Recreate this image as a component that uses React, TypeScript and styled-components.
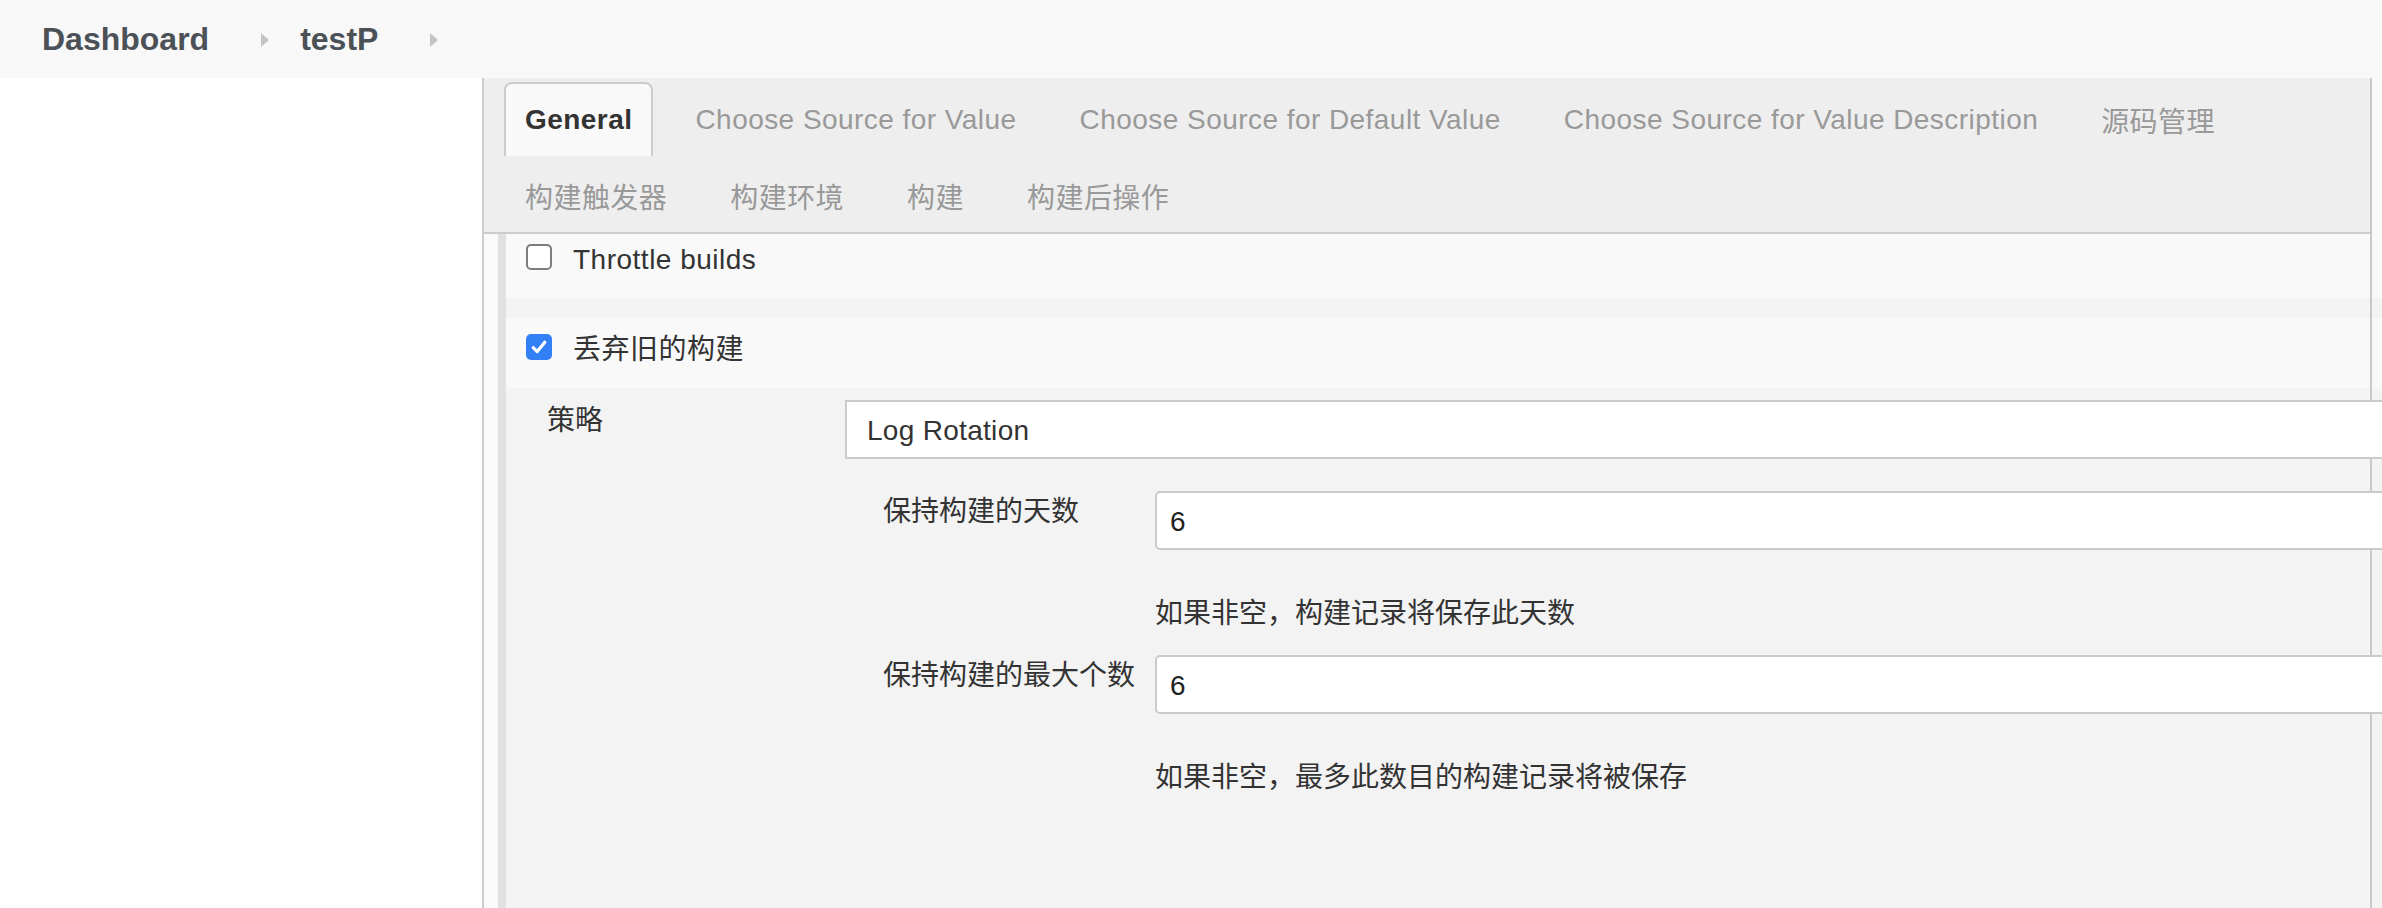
import React from 'react';
import styled, { createGlobalStyle } from 'styled-components';

const Global = createGlobalStyle`
  html, body {
    margin: 0;
    padding: 0;
    overflow: hidden;
    background: #ffffff;
  }
  body {
    font-family: "Liberation Sans", "Noto Sans CJK SC", sans-serif;
    color: #333333;
  }
  #root {
    height: 100vh;
  }
`;

const Page = styled.div`
  display: flex;
  flex-direction: column;
  height: 100vh;
`;

const Header = styled.header`
  flex: none;
  height: 78px;
  background: #f8f8f8;
  display: flex;
  align-items: center;
  padding-left: 42px;
`;

const Crumb = styled.a`
  font-size: 32px;
  font-weight: 700;
  color: #4b5157;
  text-decoration: none;
`;

const CrumbArrow = styled.span`
  width: 0;
  height: 0;
  border-top: 7px solid transparent;
  border-bottom: 7px solid transparent;
  border-left: 8px solid #c4c4c4;
  margin: 2px 31px 0 52px;
`;

const Body = styled.div`
  flex: 1;
  display: flex;
  min-height: 0;
`;

const Sidebar = styled.aside`
  flex: none;
  width: 482px;
  background: #ffffff;
  border-right: 2px solid #cccccc;
`;

const Main = styled.main`
  flex: 1;
  position: relative;
  display: flex;
  flex-direction: column;
  background: #fafafa;
  min-width: 0;

  &::after {
    content: '';
    position: absolute;
    top: 0;
    bottom: 0;
    left: 1886px;
    width: 2px;
    background: #c9c9c9;
    z-index: 1;
  }
`;

const TabBar = styled.nav`
  flex: none;
  width: 1886px;
  box-sizing: border-box;
  background: #eeeeee;
  border-bottom: 2px solid #cccccc;
  padding: 4px 20px 0;
  display: flex;
  flex-wrap: wrap;
  column-gap: 21px;
  row-gap: 2px;
`;

const Tab = styled.a<{ $active?: boolean }>`
  height: 74px;
  box-sizing: border-box;
  padding: 0 19px;
  display: flex;
  align-items: center;
  border: 2px solid ${(p) => (p.$active ? '#cccccc' : 'transparent')};
  border-bottom: none;
  border-radius: 8px 8px 0 0;
  background: ${(p) => (p.$active ? '#f9f9f9' : 'transparent')};
  color: ${(p) => (p.$active ? '#333333' : '#999999')};
  font-weight: ${(p) => (p.$active ? 700 : 400)};
  font-size: 28px;
  letter-spacing: 0.45px;
  white-space: nowrap;
  text-decoration: none;
`;

const Content = styled.div`
  flex: 1;
  display: flex;
  flex-direction: column;
  padding-left: 14px;
`;

const Section = styled.section`
  flex: 1;
  display: flex;
  flex-direction: column;
  border-left: 8px solid #e1e1e1;
`;

const CheckRow = styled.div<{ $top: number; $bottom: number }>`
  display: flex;
  align-items: flex-start;
  background: #f9f9f9;
  padding: ${(p) => `${p.$top}px 20px ${p.$bottom}px`};
`;

const Box = styled.span<{ $checked?: boolean; $offset: number }>`
  flex: none;
  width: 26px;
  height: 26px;
  box-sizing: border-box;
  margin-top: ${(p) => p.$offset}px;
  border-radius: 5px;
  border: ${(p) => (p.$checked ? 'none' : '2px solid #7d7d7d')};
  background: ${(p) => (p.$checked ? '#3380f6' : '#ffffff')};
  display: flex;
  align-items: center;
  justify-content: center;
`;

const CheckLabel = styled.label`
  margin-left: 21px;
  font-size: 28px;
  line-height: 40px;
  letter-spacing: 0.5px;
  color: #333333;
`;

const Band = styled.div`
  height: 20px;
  background: #f3f3f3;
`;

const Nested = styled.div`
  flex: 1;
  background: #f3f3f3;
  padding: 12px 0 0 41px;
`;

const FieldRow = styled.div<{ $labelWidth: number }>`
  display: grid;
  grid-template-columns: ${(p) => p.$labelWidth}px 1fr;
  align-items: start;
`;

const FieldLabel = styled.div`
  font-size: 28px;
  line-height: 40px;
  padding-top: 1px;
  color: #333333;
  white-space: nowrap;
`;

const Select = styled.select`
  position: relative;
  z-index: 2;
  appearance: none;
  display: block;
  width: calc(100% + 40px);
  height: 59px;
  box-sizing: border-box;
  border: 2px solid #cacaca;
  border-radius: 0;
  background: #ffffff;
  padding: 2px 20px 0;
  font-family: inherit;
  font-size: 28px;
  letter-spacing: 0.3px;
  color: #333333;
  outline: none;
`;

const TextInput = styled.input`
  position: relative;
  z-index: 2;
  display: block;
  width: calc(100% + 40px);
  height: 59px;
  box-sizing: border-box;
  border: 2px solid #cacaca;
  border-radius: 5px;
  background: #ffffff;
  padding: 2px 13px 0;
  font-family: inherit;
  font-size: 28px;
  color: #222222;
  outline: none;
`;

const Inner = styled.div`
  margin: 32px 0 0 336px;
  display: flex;
  flex-direction: column;
`;

const Help = styled.div`
  margin: 44px 0 21px 272px;
  font-size: 28px;
  line-height: 40px;
  color: #333333;
  white-space: nowrap;
`;

const Check = () => (
  <svg width="18" height="18" viewBox="0 0 18 18" fill="none">
    <path d="M3.2 9.6 L7.2 13.6 L14.8 4.2" stroke="#ffffff" strokeWidth="3.2" strokeLinecap="round" strokeLinejoin="round" />
  </svg>
);

const tabs = [
  'General',
  'Choose Source for Value',
  'Choose Source for Default Value',
  'Choose Source for Value Description',
  '源码管理',
  '构建触发器',
  '构建环境',
  '构建',
  '构建后操作',
];

export default function App() {
  return (
    <Page>
      <Global />
      <Header>
        <Crumb>Dashboard</Crumb>
        <CrumbArrow />
        <Crumb>testP</Crumb>
        <CrumbArrow />
      </Header>
      <Body>
        <Sidebar />
        <Main>
          <TabBar>
            {tabs.map((t, i) => (
              <Tab key={t} $active={i === 0}>
                {t}
              </Tab>
            ))}
          </TabBar>
          <Content>
            <Section>
              <CheckRow $top={6} $bottom={18}>
                <Box $offset={4} />
                <CheckLabel>Throttle builds</CheckLabel>
              </CheckRow>
              <Band />
              <CheckRow $top={12} $bottom={18}>
                <Box $checked $offset={4}>
                  <Check />
                </Box>
                <CheckLabel>丢弃旧的构建</CheckLabel>
              </CheckRow>
              <Nested>
                <FieldRow $labelWidth={298}>
                  <FieldLabel>策略</FieldLabel>
                  <Select defaultValue="log">
                    <option value="log">Log Rotation</option>
                  </Select>
                </FieldRow>
                <Inner>
                  <FieldRow $labelWidth={272}>
                    <FieldLabel>保持构建的天数</FieldLabel>
                    <TextInput defaultValue="6" />
                  </FieldRow>
                  <Help>如果非空，构建记录将保存此天数</Help>
                  <FieldRow $labelWidth={272}>
                    <FieldLabel>保持构建的最大个数</FieldLabel>
                    <TextInput defaultValue="6" />
                  </FieldRow>
                  <Help>如果非空，最多此数目的构建记录将被保存</Help>
                </Inner>
              </Nested>
            </Section>
          </Content>
        </Main>
      </Body>
    </Page>
  );
}
